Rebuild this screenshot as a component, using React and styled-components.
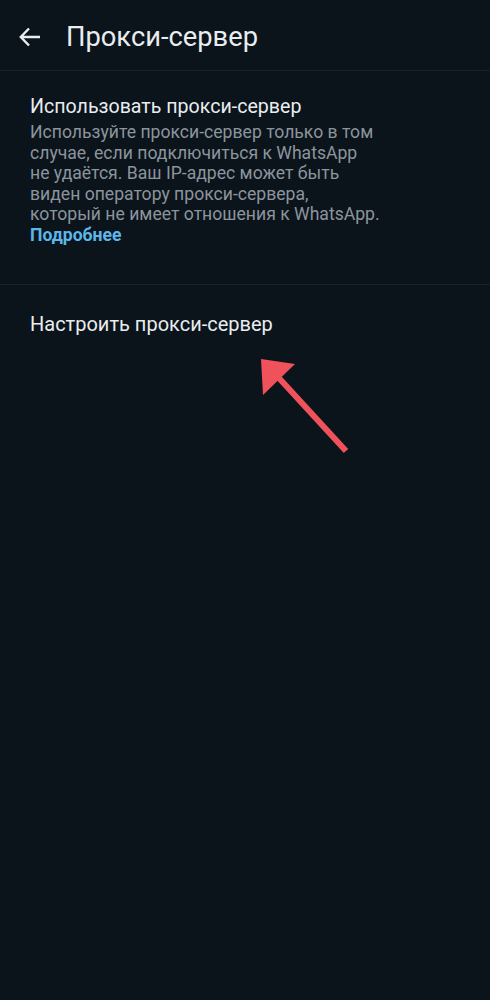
import React from "react";
import styled, { createGlobalStyle } from "styled-components";

const GlobalStyle = createGlobalStyle`
  html, body {
    margin: 0;
    padding: 0;
    background: #0b131b;
  }
  body {
    font-family: Roboto, "Noto Sans", sans-serif;
    -webkit-font-smoothing: antialiased;
  }
`;

const Screen = styled.div`
  position: relative;
  width: 490px;
  height: 1000px;
  background: #0b131b;
  overflow: hidden;
`;

const Header = styled.header`
  display: flex;
  align-items: center;
  height: 71px;
  padding: 3px 0 0 18px;
  border-bottom: 1px solid #1a222a;
  box-sizing: border-box;
`;

const BackButton = styled.button`
  display: flex;
  align-items: center;
  justify-content: center;
  width: 24px;
  height: 24px;
  padding: 0;
  border: 0;
  background: none;
  margin-right: 24px;
  cursor: pointer;
`;

const Title = styled.h1`
  margin: 0;
  font-size: 27.3px;
  font-weight: 400;
  color: #e9edef;
`;

const Section = styled.section`
  padding: ${(p) => p.$padding || "22px 30px"};
  border-bottom: ${(p) => (p.$divider ? "1px solid #1a222a" : "none")};
`;

const ItemTitle = styled.div`
  font-size: ${(p) => p.$size || "19.8px"};
  color: #e9edef;
  line-height: 24px;
`;

const Description = styled.p`
  margin: 3px 0 0;
  font-size: 17.6px;
  line-height: 20.6px;
  color: #8b959d;
`;

const MoreLink = styled.a`
  display: block;
  font-size: 17.6px;
  line-height: 20.6px;
  font-weight: 700;
  color: #5bb6ea;
  text-decoration: none;
`;

const Pointer = styled.svg`
  position: absolute;
  left: 0;
  top: 0;
  pointer-events: none;
`;

export default function App() {
  return (
    <>
      <GlobalStyle />
      <Screen>
        <Header>
          <BackButton aria-label="Назад">
            <svg width="24" height="24" viewBox="0 0 24 24">
              <path
                d="M22 12H3M11 3.5L2.8 12L11 20.5"
                fill="none"
                stroke="#e9edef"
                strokeWidth="2.4"
              />
            </svg>
          </BackButton>
          <Title>Прокси-сервер</Title>
        </Header>

        <Section $divider $padding="24px 30px 38px">
          <ItemTitle $size="19.6px">Использовать прокси-сервер</ItemTitle>
          <Description>
            Используйте прокси-сервер только в том
            <br />
            случае, если подключиться к WhatsApp
            <br />
            не удаётся. Ваш IP-адрес может быть
            <br />
            виден оператору прокси-сервера,
            <br />
            который не имеет отношения к WhatsApp.
          </Description>
          <MoreLink href="#">Подробнее</MoreLink>
        </Section>

        <Section $padding="27px 30px">
          <ItemTitle $size="20px">Настроить прокси-сервер</ItemTitle>
        </Section>

        <Pointer width="490" height="1000" viewBox="0 0 490 1000">
          <line x1="346" y1="451" x2="278" y2="377" stroke="#f0525b" strokeWidth="6" />
          <polygon points="261,359 295,364 263,395" fill="#f0525b" />
        </Pointer>
      </Screen>
    </>
  );
}
